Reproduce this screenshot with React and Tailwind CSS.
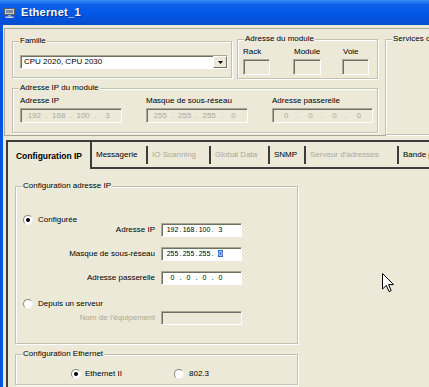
import React from 'react';

const sunken =
  'border border-t-[#aca899] border-l-[#aca899] border-r-white border-b-white shadow-[inset_1px_1px_0_#716f64]';

const GroupBox = ({ label, className = '', children }) => (
  <div className={`relative border border-[#c3c0b0] shadow-[inset_1px_1px_0_#fff,1px_1px_0_#fff] ${className}`}>
    <span className="absolute -top-[6px] left-[6px] px-[1px] bg-[#ece9d8] leading-[10px] whitespace-nowrap">
      {label}
    </span>
    {children}
  </div>
);

const IpField = ({ parts, disabled, className = '', selectLast }) => (
  <div
    className={`${sunken} flex items-center ${disabled ? 'bg-[#ece9d8] text-[#aca899] justify-around px-[4px]' : 'bg-white text-black pl-[4px] text-[7px]'} ${className}`}
  >
    {parts.map((p, i) => (
      <React.Fragment key={i}>
        <span className={disabled ? 'w-[16px] text-center' : 'w-[13px] text-center'}>
          {selectLast && i === parts.length - 1 ? (
            <span className="bg-[#316ac5] text-white px-[1px]">{p}</span>
          ) : (
            p
          )}
        </span>
        {i < parts.length - 1 && <span className="w-[3px] text-center">.</span>}
      </React.Fragment>
    ))}
  </div>
);

const Radio = ({ checked }) => (
  <span className="w-[10px] h-[10px] rounded-full bg-white border border-t-[#8c8a80] border-l-[#8c8a80] border-r-[#f4f3ee] border-b-[#f4f3ee] flex items-center justify-center shrink-0">
    {checked && <span className="w-[4px] h-[4px] rounded-full bg-black" />}
  </span>
);

const Tab = ({ label, width, disabled, last }) => (
  <div className={`${width} shrink-0 border-b-2 border-[#3c3c3c] flex items-center`}>
    <div
      className={`h-[18px] w-full flex items-center pl-[4px] whitespace-nowrap overflow-hidden ${last ? '' : 'border-r-2 border-[#3c3c3c]'} ${disabled ? 'text-[#aca899]' : 'text-black'}`}
    >
      {label}
    </div>
  </div>
);

const FormRow = ({ label, children, disabled, className = '' }) => (
  <div className={`flex items-center h-[14px] ${className}`}>
    <div className={`w-[140px] text-right pr-[1px] ${disabled ? 'text-[#aca899]' : 'text-black'}`}>{label}</div>
    <div className="ml-[5px]">{children}</div>
  </div>
);

export default function App() {
  return (
    <div className="relative w-[429px] h-[387px] overflow-hidden bg-[#ece9d8] flex flex-col font-['Liberation_Sans',Arial,sans-serif] text-[8px] leading-[10px] text-black">
      {/* title bar */}
      <div className="h-[25px] shrink-0 flex items-center bg-[linear-gradient(to_bottom,#3d8ef7_0%,#0b61e8_18%,#0055e5_60%,#0a4dcc_100%)]">
        <svg width="11" height="10" viewBox="0 0 11 10" className="ml-[4px]">
          <rect x="0.5" y="0.5" width="10" height="6" fill="#c9ccd6" stroke="#5b6270" />
          <rect x="2" y="2" width="7" height="3" fill="#7d8aa8" />
          <rect x="4" y="7" width="3" height="1.5" fill="#9aa0ac" />
          <rect x="1.5" y="8.5" width="8" height="1.5" fill="#c9ccd6" />
        </svg>
        <span className="ml-[6px] text-white font-bold text-[11px] leading-[13px] tracking-[0.3px] [text-shadow:1px_1px_0_#0a2d8a]">
          Ethernet_1
        </span>
      </div>

      <div className="flex flex-1 min-h-0">
        <div className="w-[3px] shrink-0 bg-[#0055e5]" />
        <div className="flex-1 min-w-0 flex flex-col pt-[3px]">
          {/* top frame */}
          <div className="ml-[1px] h-[108px] shrink-0 border-t border-l border-b border-[#aca899] flex items-start">
            <div className="ml-[7px] w-[366px] shrink-0 flex flex-col">
              <div className="flex items-start">
                <GroupBox label="Famille" className="mt-[12px] w-[220px] h-[37px]">
                  <div className={`ml-[7px] mt-[13px] w-[208px] h-[14px] bg-white ${sunken} flex items-center`}>
                    <span className="pl-[3px] flex-1">CPU 2020, CPU 2030</span>
                    <div className="w-[14px] h-[12px] bg-[#ece9d8] border border-t-white border-l-white border-r-[#716f64] border-b-[#716f64] flex items-center justify-center">
                      <svg width="5" height="3" viewBox="0 0 5 3">
                        <path d="M0 0H5L2.5 3Z" fill="#000" />
                      </svg>
                    </div>
                  </div>
                </GroupBox>
                <GroupBox label="Adresse du module" className="ml-[5px] mt-[10px] w-[141px] h-[40px]">
                  <div className="flex pl-[5px] pt-[7px]">
                    <div className="w-[50px] flex flex-col">
                      <span className="leading-[10px]">Rack</span>
                      <div className={`mt-[2px] w-[27px] h-[16px] ${sunken}`} />
                    </div>
                    <div className="w-[49px] flex flex-col">
                      <span className="leading-[10px] pl-[1px]">Module</span>
                      <div className={`mt-[2px] w-[28px] h-[16px] ${sunken}`} />
                    </div>
                    <div className="flex flex-col">
                      <span className="leading-[10px] pl-[1px]">Voie</span>
                      <div className={`mt-[2px] w-[27px] h-[16px] ${sunken}`} />
                    </div>
                  </div>
                </GroupBox>
              </div>
              <GroupBox label="Adresse IP du module" className="mt-[9px] w-[366px] h-[45px]">
                <div className="flex pl-[7px] pt-[7px]">
                  <div className="w-[126px] flex flex-col">
                    <span className="leading-[10px]">Adresse IP</span>
                    <IpField className="mt-[2px] w-[102px] h-[15px]" parts={['192', '168', '100', '3']} disabled />
                  </div>
                  <div className="w-[126px] flex flex-col">
                    <span className="leading-[10px]">Masque de sous-réseau</span>
                    <IpField className="mt-[2px] w-[102px] h-[15px]" parts={['255', '255', '255', '0']} disabled />
                  </div>
                  <div className="flex flex-col">
                    <span className="leading-[10px]">Adresse passerelle</span>
                    <IpField className="mt-[2px] w-[101px] h-[15px]" parts={['0', '0', '0', '0']} disabled />
                  </div>
                </div>
              </GroupBox>
            </div>
            <GroupBox label="Services de communication" className="ml-[7px] mt-[10px] flex-1 h-[96px] border-r-0" />
          </div>

          {/* tab control */}
          <div className="mt-[4px] ml-[3px] flex-1 border-t-2 border-l-2 border-[#3c3c3c] flex flex-col">
            <div className="h-[27px] shrink-0 flex">
              <div className="w-[84px] shrink-0 border-r-2 border-[#3c3c3c] flex items-center justify-center font-bold text-[8.5px]">
                Configuration IP
              </div>
              <Tab label="Messagerie" width="w-[56px]" />
              <Tab label="IO Scanning" width="w-[63px]" disabled />
              <Tab label="Global Data" width="w-[59px]" disabled />
              <Tab label="SNMP" width="w-[36px]" />
              <Tab label="Serveur d'adresses" width="w-[93px]" disabled />
              <Tab label="Bande passante" width="flex-1" last />
            </div>

            <div className="flex-1 flex flex-col pl-[7px]">
              <GroupBox label="Configuration adresse IP" className="mt-[17px] w-[283px] h-[158px] shrink-0">
                <div className="flex flex-col pt-[28px]">
                  <div className="flex items-center h-[10px] pl-[7px]">
                    <Radio checked />
                    <span className="ml-[5px]">Configurée</span>
                  </div>
                  <FormRow label="Adresse IP" className="-mt-[2px]">
                    <IpField className="w-[81px] h-[14px]" parts={['192', '168', '100', '3']} />
                  </FormRow>
                  <FormRow label="Masque de sous-réseau" className="mt-[10px]">
                    <IpField className="w-[81px] h-[14px]" parts={['255', '255', '255', '0']} selectLast />
                  </FormRow>
                  <FormRow label="Adresse passerelle" className="mt-[10px]">
                    <IpField className="w-[81px] h-[14px]" parts={['0', '0', '0', '0']} />
                  </FormRow>
                  <div className="flex items-center h-[10px] pl-[7px] mt-[14px]">
                    <Radio />
                    <span className="ml-[5px]">Depuis un serveur</span>
                  </div>
                  <FormRow label="Nom de l'équipement" disabled className="mt-[2px]">
                    <div className={`w-[81px] h-[14px] bg-[#ece9d8] ${sunken}`} />
                  </FormRow>
                </div>
              </GroupBox>
              <GroupBox label="Configuration Ethernet" className="mt-[10px] w-[283px] h-[31px] shrink-0">
                <div className="flex items-center pt-[14px] pl-[55px]">
                  <Radio checked />
                  <span className="ml-[4px] w-[89px]">Ethernet II</span>
                  <Radio />
                  <span className="ml-[5px]">802.3</span>
                </div>
              </GroupBox>
            </div>
          </div>
        </div>
      </div>

      {/* mouse cursor */}
      <svg className="absolute left-[382px] top-[273px]" width="12" height="20" viewBox="0 0 12 20">
        <path d="M0.5 0.5V16L4.3 12.4L7 18.6L9.2 17.6L6.6 11.6H11.5Z" fill="#fff" stroke="#000" strokeWidth="1" strokeLinejoin="miter" />
      </svg>
    </div>
  );
}
